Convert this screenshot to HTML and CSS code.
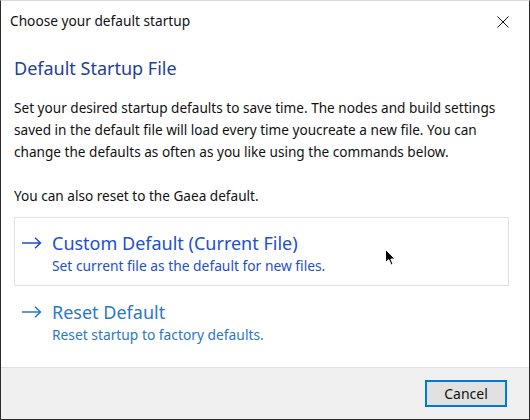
FILE: index.html
```html
<!DOCTYPE html>
<html>
<head>
<meta charset="utf-8">
<link rel="stylesheet" href="styles.css">
</head>
<body>
<div class="window">
  <div class="titlebar">
    <span class="title">Choose your default startup</span>
    <svg class="close" width="12" height="12" viewBox="0 0 12 12"><path d="M0.5 0.5 L11.5 11.5 M11.5 0.5 L0.5 11.5" stroke="#111" stroke-width="1" fill="none"/></svg>
  </div>
  <div class="content">
    <h1 class="heading">Default Startup File</h1>
    <p class="para">Set your desired startup defaults to save time. The nodes and build settings saved in the default file will load every time youcreate a new file. You can change the defaults as often as you like using the commands below.</p>
    <p class="para">You can also reset to the Gaea default.</p>
    <div class="links">
      <div class="link hovered">
        <svg class="arrow" width="20" height="12" viewBox="0 0 20 12"><path d="M0 6 H18.5 M13 0.7 L18.5 6 L13 11.3" stroke="currentColor" stroke-width="1.5" fill="none"/></svg>
        <div class="link-text">
          <div class="link-title">Custom Default (Current File)</div>
          <div class="link-sub">Set current file as the default for new files.</div>
        </div>
      </div>
      <div class="link second">
        <svg class="arrow" width="20" height="12" viewBox="0 0 20 12"><path d="M0 6 H18.5 M13 0.7 L18.5 6 L13 11.3" stroke="currentColor" stroke-width="1.5" fill="none"/></svg>
        <div class="link-text">
          <div class="link-title">Reset Default</div>
          <div class="link-sub">Reset startup to factory defaults.</div>
        </div>
      </div>
    </div>
  </div>
  <div class="footer">
    <button class="btn">Cancel</button>
  </div>
  <svg class="cursor" width="12" height="18" viewBox="0 0 12 18"><path d="M0.5 0.5 L0.5 13.5 L3.8 10.6 L6.2 16 L8 15.2 L5.8 10 L10 10 Z" fill="#000" stroke="#fff" stroke-width="1"/></svg>
</div>
</body>
</html>
```

FILE: styles.css
```css
* { box-sizing: border-box; }
html, body { margin: 0; padding: 0; }
body {
  width: 530px;
  height: 420px;
  font-family: "Noto Sans", "Open Sans", sans-serif;
  background: #fff;
  overflow: hidden;
}
.window {
  position: relative;
  width: 530px;
  height: 420px;
  border: 1px solid #2b2b2b;
  border-top-color: #d9d9d9;
  display: flex;
  flex-direction: column;
  background: #fff;
}
.titlebar {
  flex: none;
  height: 37px;
  display: flex;
  align-items: center;
  justify-content: space-between;
  padding: 2px 20px 0 9px;
}
.title {
  font-size: 13.7px;
  color: #111;
}
.close { display: block; margin-top: 2px; }
.content {
  flex: 1;
  min-height: 0;
  padding: 17px 14px 0 13px;
}
.heading {
  margin: 0;
  font-weight: normal;
  font-size: 18px;
  line-height: 26px;
  color: #1f3f99;
}
.para {
  margin: 16px 0 0;
  font-size: 13.6px;
  line-height: 22px;
  color: #111;
}
.para + .para { margin-top: 22px; }
.links {
  margin-top: 10px;
  margin-right: 6px;
  display: flex;
  flex-direction: column;
}
.link {
  display: flex;
  align-items: flex-start;
  gap: 10px;
  height: 69px;
  padding: 12px 8px 0 7px;
  border: 1px solid transparent;
  color: #1d50cc;
}
.link.hovered { border-color: #e2e2e2; }
.link.second { color: #2a78c8; }
.arrow { margin-top: 7px; flex: none; }
.link-title {
  font-size: 18px;
  line-height: 26px;
}
.link-sub {
  font-size: 13.8px;
  line-height: 20px;
}
.footer {
  flex: none;
  height: 52px;
  background: #f0f0f0;
  border-top: 1px solid #dfdfdf;
  display: flex;
  align-items: center;
  justify-content: flex-end;
  padding: 0 22px 0 0;
}
.btn {
  width: 82px;
  height: 27px;
  background: #e1e1e1;
  border: 2px solid #0078d7;
  font-family: "Noto Sans", "Open Sans", sans-serif;
  font-size: 14px;
  color: #111;
  padding: 0;
}
.cursor {
  position: absolute;
  left: 384px;
  top: 248px;
}
```
